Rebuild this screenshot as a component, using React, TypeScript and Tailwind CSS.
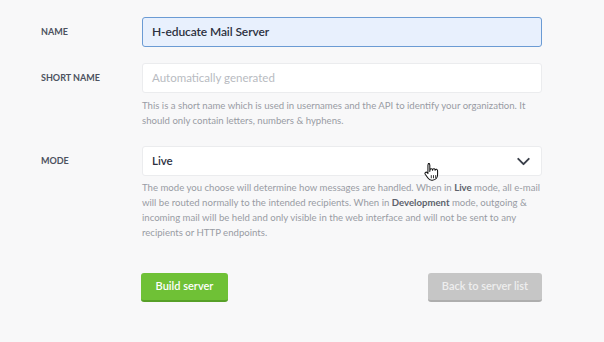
import { ChevronDown } from 'lucide-react';

const font = { fontFamily: 'Lato, "Noto Sans", sans-serif' };

const HandCursor = () => (
  <svg width="17" height="21" viewBox="0 0 16 20" className="absolute left-[423px] top-[162px]">
    <path
      d="M5 1.5c.8 0 1.4.6 1.4 1.4V9l.2-1.6c.2-.7.8-1 1.4-.9.7.1 1.1.7 1 1.4l.1-.6c.2-.7.9-1 1.5-.8.6.2.9.8.8 1.4l.1-.3c.3-.6.9-.8 1.5-.6.6.3.8.8.8 1.4v3.6c0 2.9-1.9 5.3-4.9 5.3H8.2c-1.6 0-2.7-.7-3.6-2L2 11.6c-.4-.6-.3-1.3.2-1.7.5-.4 1.3-.3 1.7.2l.7.9V2.9c0-.8.6-1.4 1.4-1.4z"
      fill="#fff"
      stroke="#111"
      strokeWidth="1"
      strokeLinejoin="round"
    />
    <path d="M7.8 12.5v3M9.9 12.5v3M12 12.5v3" stroke="#111" strokeWidth="0.8" />
  </svg>
);

export default function App() {
  return (
    <div className="relative w-[604px] h-[342px] bg-[#f8f8f9] overflow-hidden" style={font}>
      <div className="pl-[41px] pr-[62px] pt-[17px]">
        {/* Name */}
        <div className="flex items-start">
          <div className="w-[101px] h-[30px] flex items-center text-[9px] font-bold text-[#4c5260]">NAME</div>
          <div className="flex-1">
            <div className="h-[30px] rounded-[3px] border border-[#6b9bd4] bg-[#e8f0fd] flex items-center px-[9px] text-[12px] font-semibold tracking-[-0.1px] text-[#2c3140]">
              H-educate Mail Server
            </div>
          </div>
        </div>

        {/* Short name */}
        <div className="flex items-start mt-[16px]">
          <div className="w-[101px] h-[30px] flex items-center text-[9px] font-bold text-[#4c5260]">SHORT NAME</div>
          <div className="flex-1">
            <div className="h-[30px] rounded-[3px] border border-[#ebecee] bg-white flex items-center px-[9px] text-[11.5px] text-[#b8bbc1]">
              Automatically generated
            </div>
            <p className="mt-[5px] text-[9.6px] leading-[15px] text-[#999ca4] whitespace-nowrap">
              This is a short name which is used in usernames and the API to identify your organization. It
              <br />
              should only contain letters, numbers &amp; hyphens.
            </p>
          </div>
        </div>

        {/* Mode */}
        <div className="flex items-start mt-[18px]">
          <div className="w-[101px] h-[30px] flex items-center text-[9px] font-bold text-[#4c5260]">MODE</div>
          <div className="flex-1">
            <div className="h-[30px] rounded-[3px] border border-[#ebecee] bg-white flex items-center justify-between pl-[9px] pr-[7px] text-[11.5px] font-semibold text-[#2c3140]">
              <span>Live</span>
              <ChevronDown size={21} strokeWidth={2.2} className="text-[#3a3f4a]" />
            </div>
            <p className="mt-[4px] text-[9.6px] leading-[15px] text-[#999ca4] whitespace-nowrap">
              The mode you choose will determine how messages are handled. When in <b className="text-[#5d626c]">Live</b> mode, all e-mail
              <br />
              will be routed normally to the intended recipients. When in <b className="text-[#5d626c]">Development</b> mode, outgoing &amp;
              <br />
              incoming mail will be held and only visible in the web interface and will not be sent to any
              <br />
              recipients or HTTP endpoints.
            </p>
          </div>
        </div>

        {/* Actions */}
        <div className="flex items-center justify-between ml-[100px] mt-[33px]">
          <button className="h-[29px] w-[87px] rounded-[3px] bg-[#6fc136] border-b-2 border-[#57a028] text-white text-[11px] font-semibold">
            Build server
          </button>
          <button className="h-[29px] w-[114px] rounded-[3px] bg-[#c6c6c6] border-b-2 border-[#aeaeae] text-[#eeeeee] text-[11px] font-semibold">
            Back to server list
          </button>
        </div>
      </div>
      <HandCursor />
    </div>
  );
}
